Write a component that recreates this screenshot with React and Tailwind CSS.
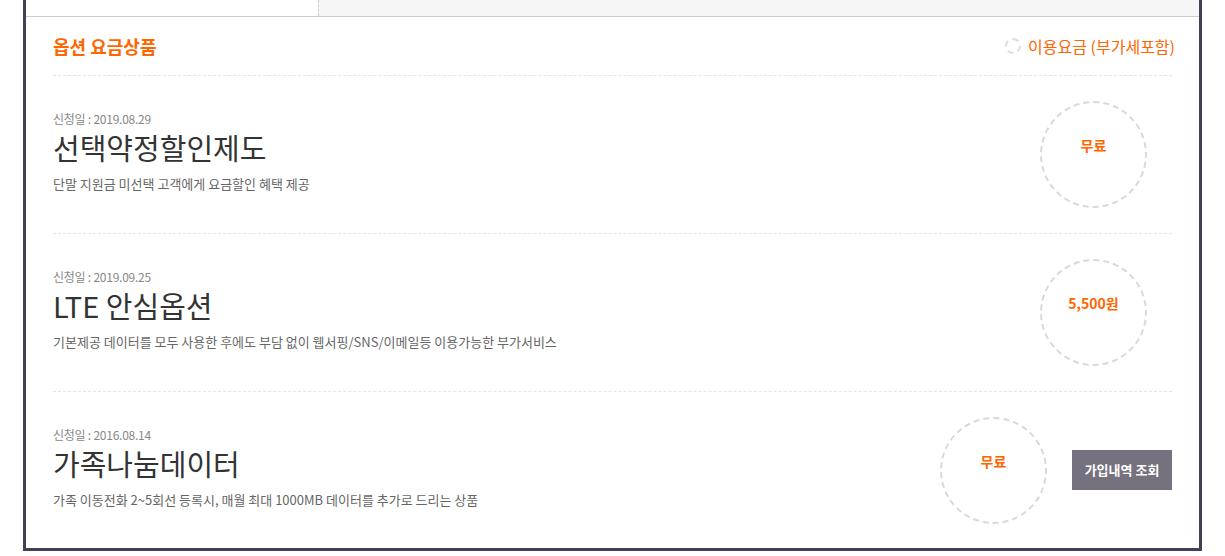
const font = { fontFamily: '"Noto Sans CJK KR", "Noto Sans", sans-serif' };

const items = [
  {
    date: '2019.08.29',
    name: '선택약정할인제도',
    desc: '단말 지원금 미선택 고객에게 요금할인 혜택 제공',
    price: '무료',
  },
  {
    date: '2019.09.25',
    name: 'LTE 안심옵션',
    desc: '기본제공 데이터를 모두 사용한 후에도 부담 없이 웹서핑/SNS/이메일등 이용가능한 부가서비스',
    price: '5,500원',
  },
  {
    date: '2016.08.14',
    name: '가족나눔데이터',
    desc: '가족 이동전화 2~5회선 등록시, 매월 최대 1000MB 데이터를 추가로 드리는 상품',
    price: '무료',
    button: '가입내역 조회',
  },
];

function PriceCircle({ price }) {
  return (
    <div className="flex h-[107px] w-[107px] shrink-0 items-center justify-center rounded-full border-2 border-dashed border-[#d9d9d9] pb-[18px]">
      <span className="text-[14px] font-bold text-[#ff6600]">{price}</span>
    </div>
  );
}

function Row({ item, last }) {
  return (
    <div
      className={`flex items-center ${last ? 'h-[156px]' : 'h-[158px] border-b border-dashed border-[#e6e6e6]'}`}
    >
      <div className="flex-1 pb-[5px]">
        <p className="text-[12px] leading-[18px] tracking-[-0.02em] text-[#888888]">
          신청일 : {item.date}
        </p>
        <h3 className="text-[29px] leading-[38px] text-[#333333]">{item.name}</h3>
        <p className="mt-[8px] text-[13px] leading-[20px] text-[#666666]">{item.desc}</p>
      </div>
      <div className={`flex items-center gap-[25px] ${item.button ? '' : 'pr-[25px]'}`}>
        <PriceCircle price={item.price} />
        {item.button && (
          <button className="h-[40px] w-[100px] bg-[#75717f] text-[13px] font-bold text-white">
            {item.button}
          </button>
        )}
      </div>
    </div>
  );
}

export default function App() {
  return (
    <div className="min-h-screen bg-white px-[23px]" style={font}>
      <div className="border-x-[3px] border-b-[3px] border-[#433f55] bg-white">
        <div className="flex h-[17px] border-b border-[#cccccc]">
          <div className="w-[293px] border-r border-dashed border-[#cccccc] bg-white" />
          <div className="flex-1 bg-[#f6f6f6]" />
        </div>

        <div className="px-[27px]">
          <div className="flex h-[59px] items-center justify-between border-b border-dashed border-[#e6e6e6]">
            <h2 className="text-[18px] font-bold text-[#ff6600]">옵션 요금상품</h2>
            <div className="-mr-[3px] flex items-center gap-[7px]">
              <span className="h-[16px] w-[16px] rounded-full border-2 border-dashed border-[#dddddd]" />
              <span className="text-[16px] text-[#ff6600]">이용요금 (부가세포함)</span>
            </div>
          </div>

          {items.map((item, i) => (
            <Row key={item.name} item={item} last={i === items.length - 1} />
          ))}
        </div>
      </div>
    </div>
  );
}
